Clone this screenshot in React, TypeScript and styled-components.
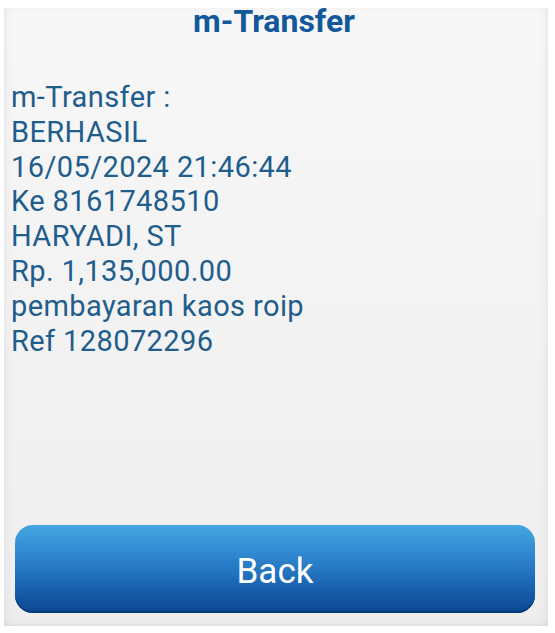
import styled, { createGlobalStyle } from "styled-components";

const GlobalStyle = createGlobalStyle`
  html, body {
    margin: 0;
    padding: 0;
    background: #ffffff;
  }
  body {
    font-family: Roboto, "Liberation Sans", Arial, sans-serif;
  }
`;

const lines = [
  "m-Transfer :",
  "BERHASIL",
  "16/05/2024 21:46:44",
  "Ke 8161748510",
  "HARYADI, ST",
  "Rp. 1,135,000.00",
  "pembayaran kaos roip",
  "Ref 128072296",
];

function App() {
  return (
    <>
      <GlobalStyle />
      <PageStyle>
        <PanelStyle>
          <TitleStyle>m-Transfer</TitleStyle>
          <MessageStyle>
            {lines.map((line, index) => (
              <div key={index}>{line}</div>
            ))}
          </MessageStyle>
          <BackButtonStyle>Back</BackButtonStyle>
        </PanelStyle>
      </PageStyle>
    </>
  );
}

const PageStyle = styled.div`
  width: 555px;
  height: 633px;
  padding: 8px 7px 0 4px;
  box-sizing: border-box;
`;

const PanelStyle = styled.div`
  height: 618px;
  box-sizing: border-box;
  padding: 0 13px 13px 7px;
  display: flex;
  flex-direction: column;
  background: linear-gradient(180deg, #f7f7f7 0%, #f2f2f2 60%, #eeeeee 100%);
  box-shadow: inset 6px 0 8px -4px rgba(0, 0, 0, 0.06),
    inset -6px 0 8px -4px rgba(0, 0, 0, 0.06),
    inset 0 -6px 8px -4px rgba(0, 0, 0, 0.05);
`;

const TitleStyle = styled.h1`
  margin: 0;
  padding-left: 2px;
  font-size: 32px;
  line-height: 26px;
  font-weight: 700;
  text-align: center;
  color: #12589b;
`;

const MessageStyle = styled.div`
  margin-top: 46px;
  font-size: 29px;
  line-height: 34.8px;
  letter-spacing: 0.4px;
  color: #1f5d8d;
`;

const BackButtonStyle = styled.button`
  margin-top: auto;
  margin-left: 4px;
  height: 88px;
  width: 520px;
  padding: 4px 0 0;
  border: 0;
  border-radius: 18px;
  background: linear-gradient(180deg, #45a6e2 0%, #2f86cf 35%, #1a63b0 70%, #0a4690 100%);
  box-shadow: inset 0 -2px 0 #063d7f;
  color: #ffffff;
  font-family: Roboto, "Liberation Sans", Arial, sans-serif;
  font-size: 35px;
  cursor: pointer;
`;

export default App;
